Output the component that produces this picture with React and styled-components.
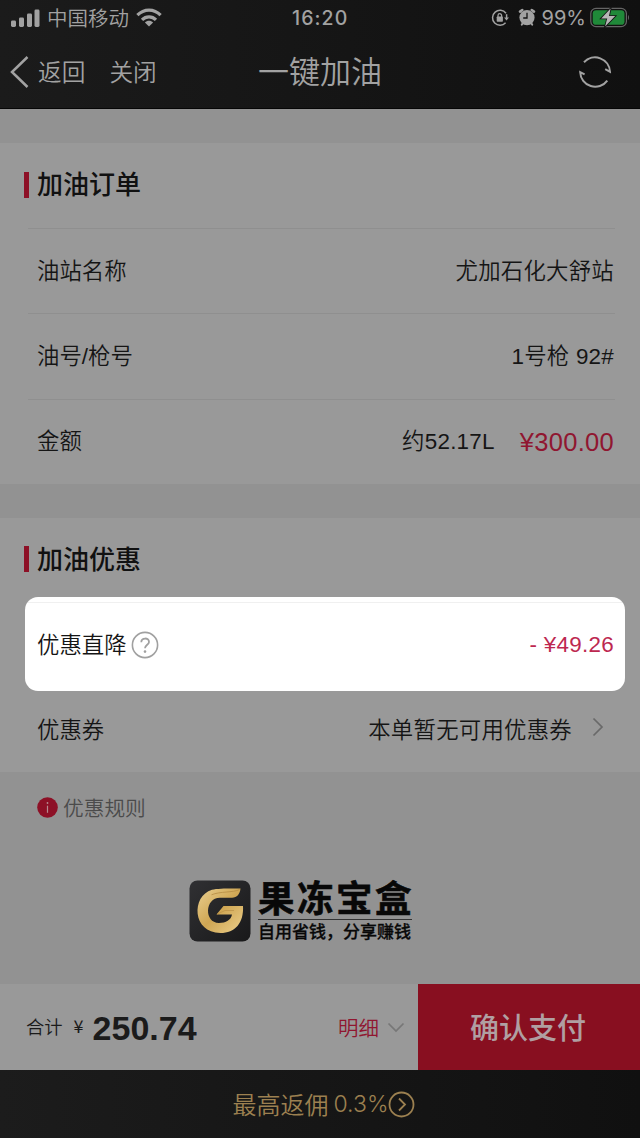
import React from "react";
import styled, { createGlobalStyle } from "styled-components";

const orderRows = [
    { label: '油站名称', value: '尤加石化大舒站' },
    { label: '油号/枪号', value: '1号枪 92#' },
];

export default function App() {
    return (
        <Page>
            <GlobalStyle />
            <Header>
                <StatusBar />
                <NavBar />
            </Header>
            <Content>
                <Section>
                    <SectionTitle>加油订单</SectionTitle>
                    {orderRows.map(row => (
                        <Row key={row.label}>
                            <Label>{row.label}</Label>
                            <Value>{row.value}</Value>
                        </Row>
                    ))}
                    <Row>
                        <Label>金额</Label>
                        <Amount>
                            <Value>约52.17L</Value>
                            <Price $size="25.5px">¥300.00</Price>
                        </Amount>
                    </Row>
                </Section>
                <Section>
                    <SectionTitle $short>加油优惠</SectionTitle>
                    <Highlight>
                        <Label>
                            <span>优惠直降</span>
                            <HelpIcon />
                        </Label>
                        <Price $bright>- ¥49.26</Price>
                    </Highlight>
                    <CouponRow>
                        <Label>优惠券</Label>
                        <Coupon>
                            <Value>本单暂无可用优惠券</Value>
                            <svg width="12" height="20" viewBox="0 0 12 20" fill="none" stroke="#696969" strokeWidth="1.7">
                                <path d="M1.5 1.5L10 10L1.5 18.5" />
                            </svg>
                        </Coupon>
                    </CouponRow>
                </Section>
                <Rules>
                    <InfoIcon />
                    <span>优惠规则</span>
                </Rules>
                <Brand>
                    <BrandIcon />
                    <BrandText>
                        <BrandName>果冻宝盒</BrandName>
                        <Slogan>自用省钱，分享赚钱</Slogan>
                    </BrandText>
                </Brand>
            </Content>
            <PayBar>
                <Total>
                    <TotalLabel>合计</TotalLabel>
                    <Yen>¥</Yen>
                    <TotalValue>250.74</TotalValue>
                </Total>
                <Detail>
                    明细
                    <svg width="18" height="11" viewBox="0 0 18 11" fill="none" stroke="#777" strokeWidth="1.7">
                        <path d="M1.5 1.5L9 9L16.5 1.5" />
                    </svg>
                </Detail>
                <PayButton>确认支付</PayButton>
            </PayBar>
            <Rebate>
                <span>最高返佣</span>
                <RebateRate>0.3%</RebateRate>
                <svg width="27" height="27" viewBox="0 0 27 27" fill="none" stroke="#9c8050" strokeWidth="1.8">
                    <circle cx="13.5" cy="13.5" r="12" />
                    <path d="M11 7.5L17 13.5L11 19.5" />
                </svg>
            </Rebate>
        </Page>
    );
}

const StatusBar = () => (
    <Status>
        <Carrier>
            <svg width="29" height="18" viewBox="0 0 29 18" fill="#a2a2a2">
                <rect x="0" y="11.5" width="5" height="6.5" rx="1.4" />
                <rect x="8" y="8.5" width="5" height="9.5" rx="1.4" />
                <rect x="16" y="4.5" width="5" height="13.5" rx="1.4" />
                <rect x="23.5" y="0.5" width="5" height="17.5" rx="1.4" />
            </svg>
            <span>中国移动</span>
            <svg width="26" height="19" viewBox="0 0 26 19" fill="none" stroke="#a2a2a2" strokeWidth="3.2">
                <path d="M1.4 7.2C8 0.4 18 0.4 24.6 7.2" />
                <path d="M6 11.8C10 7.8 16 7.8 20 11.8" />
                <path d="M13 18.5L8.9 14.4C11.2 12.3 14.8 12.3 17.1 14.4Z" fill="#a2a2a2" stroke="none" />
            </svg>
        </Carrier>
        <Clock>16:20</Clock>
        <Indicators>
            <svg width="18" height="18" viewBox="0 0 18 18" fill="none" stroke="#a2a2a2" strokeWidth="1.5">
                <path d="M15 4.2A7.5 7.5 0 1 0 14.6 13.8" />
                <path d="M15.6 5.2V9" />
                <path d="M13.1 8.4H18L15.5 11.6Z" fill="#a2a2a2" stroke="none" />
                <rect x="5.7" y="7.6" width="6.2" height="5.2" rx="0.7" fill="#a2a2a2" stroke="none" />
                <path d="M7 8V6.5A1.8 1.8 0 0 1 10.6 6.5V8" strokeWidth="1.3" />
            </svg>
            <svg width="18" height="19" viewBox="0 0 18 19">
                <g stroke="#a2a2a2" strokeWidth="2.6" strokeLinecap="round">
                    <path d="M2 3.6L4.3 2M16 3.6L13.7 2" />
                    <path d="M3.8 16.6L5 15M14.2 16.6L13 15" strokeWidth="2" />
                </g>
                <circle cx="9" cy="9.6" r="7.6" fill="#a2a2a2" />
                <path d="M9 4.8V10H5.2" fill="none" stroke="#151515" strokeWidth="1.3" />
            </svg>
            <Percent>99%</Percent>
            <svg width="40" height="21" viewBox="0 0 40 21">
                <rect x="0.8" y="1.3" width="35.6" height="18.4" rx="5.2" fill="none" stroke="#656565" strokeWidth="1.2" />
                <rect x="2.7" y="3.2" width="31.8" height="14.6" rx="3.4" fill="#208939" />
                <path d="M38 7.8C39.3 8.8 39.3 12.2 38 13.2Z" fill="#656565" />
                <path d="M20.6 1.5L11.2 11.4H17.2L15.1 19.5L25.2 9.1H19Z" fill="#b5b5b5" stroke="#151515" strokeWidth="1.7" paintOrder="stroke" />
            </svg>
        </Indicators>
    </Status>
);

const NavBar = () => (
    <Nav>
        <NavLinks>
            <svg width="19" height="32" viewBox="0 0 19 32" fill="none" stroke="#a2a2a2" strokeWidth="2.5">
                <path d="M17.5 1L2 16L17.5 31" />
            </svg>
            <NavLink>返回</NavLink>
            <NavLink>关闭</NavLink>
        </NavLinks>
        <NavTitle>一键加油</NavTitle>
        <Refresh>
            <svg width="34" height="34" viewBox="0 0 34 34" fill="none" stroke="#a2a2a2" strokeWidth="2">
                <path d="M6 7.2A15 15 0 0 1 32 16.8L27.2 14.2" />
                <path d="M29.3 25.6A15 15 0 0 1 2.2 17.2L6.6 19.4" />
            </svg>
        </Refresh>
    </Nav>
);

const HelpIcon = () => (
    <svg width="28" height="28" viewBox="0 0 28 28" fill="none" stroke="#a0a0a0">
        <circle cx="14" cy="14" r="12.6" strokeWidth="1.6" />
        <path d="M10.3 11.2C10.3 6.4 18 6.3 18 10.9C18 13.7 14 13.8 14 17.3" strokeWidth="1.8" />
        <circle cx="14" cy="20.6" r="1.3" fill="#a0a0a0" stroke="none" />
    </svg>
);

const InfoIcon = () => (
    <svg width="21" height="21" viewBox="0 0 21 21">
        <circle cx="10.5" cy="10.5" r="10.3" fill="#8d1026" />
        <path d="M10.5 8.7V15.8" stroke="#b58a90" strokeWidth="1.2" />
        <circle cx="10.5" cy="6" r="0.9" fill="#b58a90" />
    </svg>
);

const BrandIcon = () => (
    <svg width="62" height="62" viewBox="0 0 62 62">
        <defs>
            <linearGradient id="gold" x1="0" y1="0" x2="1" y2="1">
                <stop offset="0" stopColor="#e9cf90" />
                <stop offset="0.5" stopColor="#cfa653" />
                <stop offset="1" stopColor="#ecd08d" />
            </linearGradient>
            <linearGradient id="tile" x1="0" y1="0" x2="1" y2="1">
                <stop offset="0" stopColor="#303033" />
                <stop offset="1" stopColor="#19191a" />
            </linearGradient>
        </defs>
        <rect x="0.5" y="0.5" width="61" height="61" rx="8" fill="url(#tile)" />
        <path
            fill="url(#gold)"
            d="M51.5 8.5C51 14 48 17.8 43 17.8H31C15.5 17.8 15 43 30 43C37 43 42 40 43 34.5H27.5L34.5 26H54C55 43 46 53 31.5 53C3 53 2 16 23 9.8C29 8.2 43 8.5 51.5 8.5Z"
        />
        <path d="M50.5 9.6C44 12.8 31 11.2 22.5 14.8" fill="none" stroke="#b58b43" strokeWidth="0.8" />
        <path d="M28 34.2L36 30.5H45" fill="none" stroke="#b58b43" strokeWidth="0.6" />
    </svg>
);

const GlobalStyle = createGlobalStyle`
    * {
        box-sizing: border-box;
    }

    body {
        margin: 0;
        background-color: #929292;
        font-family: "Liberation Sans", "Noto Sans CJK SC", sans-serif;
    }

    svg {
        display: block;
        flex-shrink: 0;
    }
`;

const Page = styled.div`
    width: 640px;
    height: 1138px;

    display: flex;
    flex-direction: column;
    overflow: hidden;
`;

const Header = styled.header`
    height: 109px;
    flex-shrink: 0;

    color: #a2a2a2;
    background: linear-gradient(90deg, #1b1b1b, #101010);
    border-bottom: 1px solid #060606;
    font-family: "Noto Sans CJK SC", sans-serif;
    font-weight: 350;
`;

const Status = styled.div`
    height: 35px;
    padding: 0 1px 0 11px;

    display: grid;
    grid-template-columns: 281px auto 1fr;
    align-items: center;
`;

const Carrier = styled.div`
    display: flex;
    align-items: center;
    gap: 7px;

    font-size: 20.5px;
    line-height: 34px;

    span {
        margin-top: -2px;
    }
`;

const Clock = styled.div`
    font-family: Inter, sans-serif;
    font-weight: 500;
    font-size: 19.5px;
    letter-spacing: 1.1px;
`;

const Indicators = styled.div`
    display: flex;
    justify-content: flex-end;
    align-items: center;
    gap: 9px;
    margin-right: 9px;
`;

const Percent = styled.span`
    margin: 0 -5px 0 -3px;

    font-family: Inter, sans-serif;
    font-weight: 400;
    font-size: 20px;
`;

const Nav = styled.nav`
    height: 73px;
    padding: 0 28px 0 10px;

    display: grid;
    grid-template-columns: 1fr auto 1fr;
    align-items: center;
`;

const NavLinks = styled.div`
    display: flex;
    align-items: center;
`;

const NavLink = styled.span`
    margin: -2px 0 0 9px;
    font-size: 23.7px;

    & + & {
        margin-left: 24px;
    }
`;

const NavTitle = styled.h1`
    margin: -3px 0 0 18px;

    font-weight: 350;
    font-size: 31px;
    line-height: 40px;
`;

const Refresh = styled.div`
    display: flex;
    justify-content: flex-end;
`;

const Content = styled.main`
    height: 875px;
    padding-top: 34px;
    flex-shrink: 0;

    background-color: #929292;
`;

const Section = styled.section`
    background-color: #999;

    & + & {
        margin-top: 34px;
    }
`;

const SectionTitle = styled.h2`
    height: ${props => props.$short ? '79px' : '85px'};
    margin: 0;
    padding: ${props => props.$short ? '0 0 0 24px' : '0 0 6px 24px'};

    display: flex;
    align-items: center;
    gap: 8px;

    color: #111;
    font-weight: 500;
    font-size: 26px;

    &::before {
        content: "";
        width: 5px;
        height: 26px;
        margin-top: 4px;
        background-color: #8d1026;
    }
`;

const Row = styled.div`
    height: 85.3px;
    margin: 0 25px 0 28px;
    padding: 1px 1px 0 9px;

    display: flex;
    justify-content: space-between;
    align-items: center;

    border-top: 1px solid #8f8f8f;
`;

const Highlight = styled.div`
    height: 94px;
    margin: 0 15px 0 25px;
    padding: 3px 11px 0 12px;

    display: flex;
    justify-content: space-between;
    align-items: center;

    background: linear-gradient(#fff 5px, #f0f0f0 5px, #f0f0f0 6px, #fff 6px);
    border-radius: 13px;

    span span {
        padding-top: 2px;
    }
`;

const CouponRow = styled.div`
    height: 81px;
    padding: 0 36px 0 37px;

    display: flex;
    justify-content: space-between;
    align-items: center;
`;

const Label = styled.span`
    display: flex;
    align-items: center;
    gap: 4px;

    color: #151515;
    font-weight: 350;
    font-size: 22.4px;
    line-height: 34px;
`;

const Value = styled(Label)`
    letter-spacing: 0.25px;
`;

const Amount = styled.div`
    display: flex;
    align-items: center;
    gap: 25px;
`;

const Coupon = styled.div`
    display: flex;
    align-items: center;
    gap: 20px;

    svg {
        margin-top: -9px;
    }
`;

const Price = styled.span`
    color: ${props => props.$bright ? '#bd2850' : '#901630'};
    font-size: ${props => props.$size || '22.4px'};
    letter-spacing: 0.3px;
`;

const Rules = styled.div`
    height: 72px;
    padding-left: 37px;

    display: flex;
    align-items: center;
    gap: 5px;

    color: #4b4b4b;
    font-weight: 350;
    font-size: 20.7px;

    span {
        margin-top: -2px;
    }
`;

const Brand = styled.div`
    margin: 35px 0 0 189px;

    display: flex;
    align-items: center;
    gap: 7px;
`;

const BrandText = styled.div`
    width: 154px;
    color: #080808;
    white-space: nowrap;
`;

const BrandName = styled.div`
    height: 41px;

    font-weight: 700;
    font-size: 36.5px;
    line-height: 42px;
    letter-spacing: 2.5px;
    border-bottom: 1px solid #333;
    -webkit-text-stroke: 0.6px #080808;
`;

const Slogan = styled.div`
    height: 24px;

    font-weight: 500;
    font-size: 17px;
    line-height: 26px;
    -webkit-text-stroke: 0.3px #080808;
`;

const PayBar = styled.footer`
    height: 86px;
    flex-shrink: 0;

    display: flex;
    align-items: stretch;

    background-color: #999;
`;

const Total = styled.div`
    padding-left: 26px;
    flex: 1;

    display: flex;
    align-items: center;

    color: #1b1b1b;
`;

const TotalLabel = styled.span`
    margin-top: -2px;

    font-weight: 350;
    font-size: 18.3px;
`;

const Yen = styled.span`
    margin: -5px 9px 0 11px;

    font-family: "Noto Sans CJK SC", sans-serif;
    font-weight: 400;
    font-size: 18px;
`;

const TotalValue = styled.span`
    padding-top: 2px;

    font-weight: 700;
    font-size: 34px;
`;

const Detail = styled.div`
    margin-right: 13px;

    display: flex;
    align-items: center;
    gap: 8px;

    color: #901630;
    font-weight: 350;
    font-size: 20.5px;
`;

const PayButton = styled.button`
    width: 222px;
    padding: 0 2px 2px 0;

    color: #b09fa2;
    background-color: #880f20;
    border: none;
    font-family: "Noto Sans CJK SC", sans-serif;
    font-weight: 500;
    font-size: 29px;
`;

const Rebate = styled.div`
    height: 68px;
    padding-left: 8px;
    flex-shrink: 0;

    display: flex;
    justify-content: center;
    align-items: center;

    color: #9c8050;
    background: linear-gradient(90deg, #1c1c1c, #101010);
    font-weight: 350;
    font-size: 24px;

    span {
        margin-top: -1px;
    }
`;

const RebateRate = styled.span`
    margin-left: 5px;

    font-family: Inter, sans-serif;
    font-size: 23px;
`;
